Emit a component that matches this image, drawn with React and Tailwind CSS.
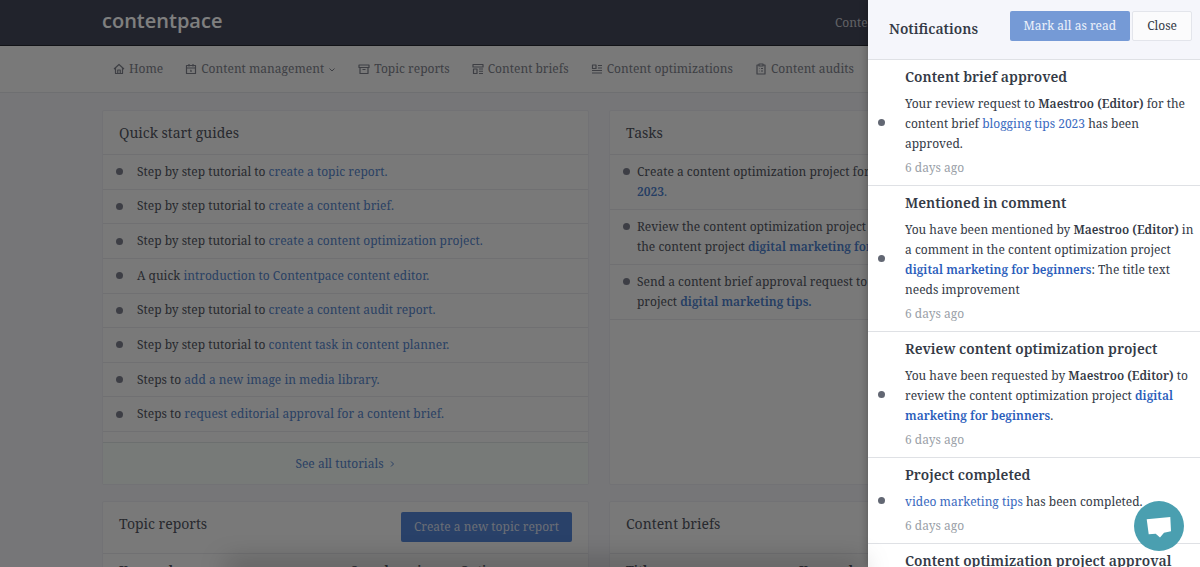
import React from 'react';

const iconPaths = {
  home: 'M2 12 12 3l10 9M5 10v11h14V10M9.5 21v-7h5v7',
  calendar: 'M3 5h18v16H3zM3 10h18M8 2v5M16 2v5M10.5 14.5H12V18',
  archive: 'M2 4h20v5H2zM4 9v12h16V9M9 13h6',
  brief: 'M2 3h20v5H2zM3 12h7v9H3zM14 12h8M14 16.500h8M14 21h8',
  optimize: 'M3 4h7v7H3zM14 5h8M14 10h8M2 15h20M2 20h20',
  audit: 'M8 4H4v18h16V4h-4M8 2h8v4H8zM8 11h1M12 11h4M8 16h1M12 16h4',
};

function Icon({ name }) {
  return (
    <svg viewBox="0 0 24 24" className="size-3 shrink-0" fill="none" stroke="currentColor" strokeWidth="2.4" strokeLinejoin="round" aria-hidden="true">
      <path d={iconPaths[name]} />
    </svg>
  );
}

function Chevron({ right = false }) {
  return (
    <svg viewBox="0 0 8 8" className="size-2 shrink-0" fill="none" stroke="currentColor" aria-hidden="true">
      <path d={right ? 'M3 1.500 5.500 4 3 6.500' : 'M1.500 3.500 4 6l2.500-2.500'} />
    </svg>
  );
}

const Dot = ({ className = '' }) => (
  <span className={'size-[7px] shrink-0 rounded-full ' + className} aria-hidden="true" />
);

const nav = [
  ['home', 'Home'],
  ['calendar', 'Content management', true],
  ['archive', 'Topic reports'],
  ['brief', 'Content briefs'],
  ['optimize', 'Content optimizations'],
  ['audit', 'Content audits'],
];

const guides = [
  ['Step by step tutorial to', 'create a topic report.'],
  ['Step by step tutorial to', 'create a content brief.'],
  ['Step by step tutorial to', 'create a content optimization project.'],
  ['A quick', 'introduction to Contentpace content editor.'],
  ['Step by step tutorial to', 'create a content audit report.'],
  ['Step by step tutorial to', 'content task in content planner.'],
  ['Steps to', 'add a new image in media library.'],
  ['Steps to', 'request editorial approval for a content brief.'],
];

const PageLink = ({ children, bold }) => (
  <a href="#" className={bold ? 'font-semibold text-[#4a7cc8]' : 'text-[#5583c8]'}>{children}</a>
);

const tasks = [
  <>Create a content optimization project for <PageLink bold>blogging tips<br />2023</PageLink><PageLink>.</PageLink></>,
  <>Review the content optimization project in<br />the content project <PageLink bold>digital marketing for beginners.</PageLink></>,
  <>Send a content brief approval request to Maestroo<br />project <PageLink bold>digital marketing tips.</PageLink></>,
];

const PanelLink = ({ children, bold }) => (
  <a href="#" className={bold ? 'font-semibold text-[#2a5dbb]' : 'text-[#3a6ac0]'}>{children}</a>
);
const editor = <strong className="font-semibold">Maestroo (Editor)</strong>;

const notifications = [
  ['Content brief approved', <>Your review request to {editor} for the content brief <PanelLink>blogging tips 2023</PanelLink> has been approved.</>],
  ['Mentioned in comment', <>You have been mentioned by {editor} in a comment in the content optimization project <PanelLink bold>digital marketing for beginners</PanelLink>: The title text needs improvement</>],
  ['Review content optimization project', <>You have been requested by {editor} to review the content optimization project <PanelLink bold>digital marketing for beginners</PanelLink>.</>],
  ['Project completed', <><PanelLink>video marketing tips</PanelLink> has been completed.</>],
  ['Content optimization project approval', <>The content optimization project has been approved.</>],
];

function Card({ title, action, children }) {
  return (
    <section className="flex flex-col rounded-xs border border-[#e4e5ea] bg-[#f3f3f3]">
      <div className={'flex justify-between border-b border-[#e0e1e4] px-4 ' + (action !== undefined ? 'h-[52px] items-start pt-[10px]' : 'h-11 items-center')}>
        <h2 className={'text-sm ' + (action !== undefined ? 'leading-6' : '')}>{title}</h2>
        {action}
      </div>
      {children}
    </section>
  );
}

function ReportTable({ columns, widths }) {
  return (
    <table className="w-full table-fixed text-left text-xs">
      <thead>
        <tr>
          {columns.map((c, i) => (
            <th key={c} className={'pt-[7px] pl-4 font-bold leading-5 ' + widths[i]}>{c}</th>
          ))}
        </tr>
      </thead>
    </table>
  );
}

export default function App() {
  return (
    <div className="relative h-screen overflow-hidden bg-[#ececf0] font-['Noto_Serif','DejaVu_Serif_Condensed',serif] text-xs text-[#50535e]">
      <header className="h-[46px] border-b border-[#24262e] bg-[#424658]">
        <div className="mx-auto flex h-full max-w-[996px] items-center justify-between">
          <a href="#" className="pb-1 font-['Open_Sans',sans-serif] text-xl font-semibold text-white">contentpace</a>
          <a href="#" className="w-[263px] text-[#c2c4cc]">Contentpace</a>
        </div>
      </header>

      <nav className="h-[47px] border-b border-[#dddee3] bg-[#f3f3f3] text-[#7c7f89]">
        <ul className="mx-auto flex h-full max-w-[996px] items-center gap-[22px] pl-[11px]">
          {nav.map(([icon, label, menu]) => (
            <li key={label}>
              <a href="#" className="flex items-center gap-1 whitespace-nowrap">
                <Icon name={icon} />
                {label}
                {menu && <Chevron />}
              </a>
            </li>
          ))}
        </ul>
      </nav>

      <main className="mx-auto grid max-w-[996px] grid-cols-2 gap-x-5 gap-y-4 pt-[17px] pr-[2px]">
        <Card title="Quick start guides">
          <ul className="flex h-[277px] flex-col">
            {guides.map(([lead, link]) => (
              <li key={link} className="flex flex-1 items-center gap-[14px] border-b border-[#e0e1e4] pl-[13px]">
                <Dot className="bg-[#7a7d8a]" />
                <span>{lead} <PageLink>{link}</PageLink></span>
              </li>
            ))}
          </ul>
          <div className="mt-[10px] flex h-[42px] items-center justify-center border-t border-[#d9dfde] bg-[#eff4f1]">
            <a href="#" className="flex items-center gap-1 text-[#5583c8]">See all tutorials <Chevron right /></a>
          </div>
        </Card>

        <Card title="Tasks">
          <ul>
            {tasks.map((task, i) => (
              <li key={i} className="flex gap-[7px] whitespace-nowrap border-b border-[#e0e1e4] py-[7px] pl-[13px] leading-5">
                <Dot className="mt-[6px] bg-[#7a7d8a]" />
                <span>{task}</span>
              </li>
            ))}
          </ul>
        </Card>

        <Card
          title="Topic reports"
          action={<button className="h-[30px] rounded-xs bg-[#5282d2] px-[13px] text-[#d5dcea]">Create a new topic report</button>}
        >
          <ReportTable columns={['Keyword', 'Search engine', 'Options']} widths={['w-[232px]', 'w-[109px]', '']} />
        </Card>

        <Card title="Content briefs" action={null}>
          <ReportTable columns={['Title', 'Keyword']} widths={['w-[173px]', '']} />
        </Card>
      </main>

      <div className="absolute inset-0 bg-black/50" />

      <aside className="absolute inset-y-0 right-0 w-[332px] overflow-hidden bg-white text-[#343a46] shadow-[0_0_8px_rgba(0,0,0,0.3)]" aria-label="Notifications">
        <div className="flex h-[60px] items-start justify-between border-b border-[#dfe1e5] bg-[#f5f6fb] pt-[11px] pr-2 pl-[21px]">
          <h2 className="pt-2 text-sm font-semibold leading-5">Notifications</h2>
          <div className="flex gap-[2px]">
            <button className="h-[30px] rounded-xs bg-[#759ad6] px-[14px] text-[#edf2fb]">Mark all as read</button>
            <button className="h-[30px] rounded-xs border border-[#e3e5eb] bg-[#fbfbfc] px-[14px]">Close</button>
          </div>
        </div>
        <ul>
          {notifications.map(([title, body]) => (
            <li key={title} className="flex items-center gap-5 border-b border-[#dfe1e5] pt-[7px] pr-1 pb-[7px] pl-[10px]">
              <Dot className="bg-[#626773]" />
              <div>
                <h3 className="text-sm font-semibold leading-5 whitespace-nowrap">{title}</h3>
                <p className="mt-[7px] leading-5">{body}</p>
                <p className="mt-1 leading-5 text-[#9a9fa8]">6 days ago</p>
              </div>
            </li>
          ))}
        </ul>
      </aside>

      <div className="pointer-events-none absolute -bottom-1 left-[230px] h-1 w-[630px] shadow-[0_0_26px_4px_rgba(0,0,0,0.35)]" />

      <button aria-label="Open chat" className="absolute right-4 bottom-4 size-[50px] rounded-full bg-[#4a9fb0]">
        <svg viewBox="0 0 50 50" fill="white" aria-hidden="true">
          <path d="M12.700 18.300 36.300 16 37 30.300 30 31.700 26 36.500 21.700 32.700 14.700 33.300Z" />
        </svg>
      </button>
    </div>
  );
}
